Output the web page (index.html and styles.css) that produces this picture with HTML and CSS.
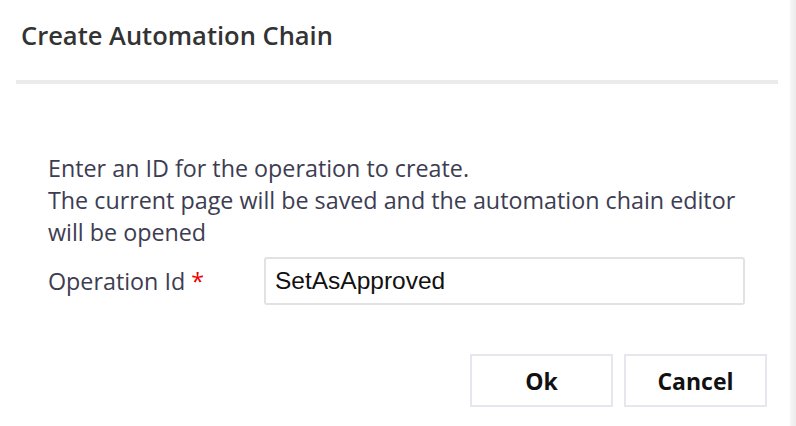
FILE: index.html
```html
<!DOCTYPE html>
<html>
<head>
<meta charset="utf-8">
<link rel="stylesheet" href="styles.css">
</head>
<body>
<div class="window">
  <div class="dialog">
    <div class="header"><h1 class="title">Create Automation Chain</h1></div>
    <div class="divider"></div>
    <div class="content">
      <p class="info">Enter an ID for the operation to create.<br>The current page will be saved and the automation chain editor will be opened</p>
      <div class="field">
        <label class="label">Operation Id <span class="req">*</span></label>
        <div class="input">SetAsApproved</div>
      </div>
      <div class="actions">
        <button class="btn">Ok</button>
        <button class="btn">Cancel</button>
      </div>
    </div>
  </div>
  <div class="scrollbar"></div>
</div>
</body>
</html>
```
FILE: styles.css
```css
html, body { margin: 0; padding: 0; background: #fff; }
body { width: 796px; height: 426px; overflow: hidden; font-family: "Open Sans", sans-serif; }
.window { display: flex; height: 426px; }
.dialog { width: 790px; display: flex; flex-direction: column; }
.scrollbar { width: 6px; background: linear-gradient(to right, #f6f6f6, #ececec); }
.header { height: 80px; display: flex; align-items: center; padding-left: 21px; box-sizing: border-box; padding-bottom: 10px; }
.title { margin: 0; font-size: 25.5px; font-weight: 600; color: #333; letter-spacing: 0; }
.divider { height: 4px; background: #ebebeb; margin: 0 12px 0 16px; }
.content { padding: 68px 23px 0 48px; }
.info { margin: 0; font-size: 23.3px; line-height: 32px; color: #3d3d52; }
.field { display: flex; align-items: center; margin-top: 9px; }
.label { width: 216px; font-size: 23.3px; color: #3d3d52; }
.req { color: #e00; }
.input { width: 481px; height: 48px; box-sizing: border-box; border: 2px solid #e2e2e2; border-radius: 3px; padding-left: 9px; display: flex; align-items: center; font-family: "Liberation Sans", Arial, sans-serif; font-size: 24.5px; color: #111; }
.actions { display: flex; justify-content: flex-end; gap: 11px; margin-top: 49px; }
.btn { width: 143px; height: 53px; background: #fff; border: 2px solid #e6e6ee; font-family: "Open Sans", sans-serif; font-weight: 700; font-size: 23px; color: #111; padding: 0; }
```
